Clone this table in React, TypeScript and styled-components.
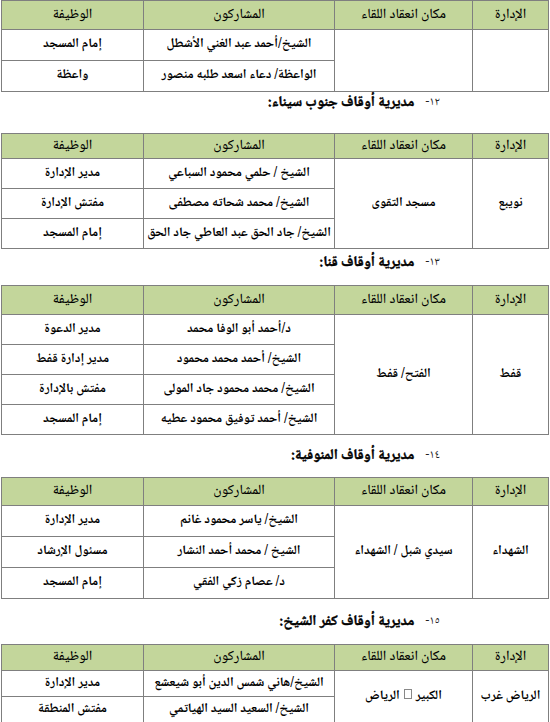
import React from "react";
import styled, { createGlobalStyle } from "styled-components";

const GlobalStyle = createGlobalStyle`
  html, body {
    margin: 0;
    padding: 0;
    background: #ffffff;
  }
  body {
    font-family: "Noto Naskh Arabic", "Noto Sans Arabic", "DejaVu Sans", sans-serif;
    color: #000;
  }
`;

const Page = styled.div`
  width: 550px;
  box-sizing: border-box;
  padding: 0 1px 0 2px;
  direction: rtl;
  display: flex;
  flex-direction: column;
`;

const Heading = styled.div<{ $top: number; $bottom: number }>`
  display: flex;
  align-items: center;
  gap: 11px;
  padding-right: 109px;
  margin-top: ${(p) => p.$top}px;
  margin-bottom: ${(p) => p.$bottom}px;
  height: 20px;
  line-height: 20px;
`;

const HeadingNumber = styled.span`
  font-size: 12px;
  font-weight: 400;
  color: #222;
`;

const HeadingTitle = styled.span`
  font-size: 14.5px;
  font-weight: 900;
  -webkit-text-stroke: 0.4px #000;
`;

const Table = styled.table`
  width: 547px;
  border-collapse: collapse;
  table-layout: fixed;
  direction: rtl;
`;

const HeadCell = styled.th<{ $h: number }>`
  background: #c3d69b;
  border: 1px solid #7f7f7f;
  height: ${(p) => p.$h}px;
  padding: 0;
  font-size: 14px;
  line-height: 1.2;
  font-weight: 500;
  text-align: center;
  vertical-align: middle;
`;

const Cell = styled.td<{ $h: number }>`
  border: 1px solid #7f7f7f;
  height: ${(p) => p.$h}px;
  padding: 0 1px;
  font-size: 13px;
  line-height: 1.2;
  font-weight: 700;
  text-align: center;
  vertical-align: middle;
  white-space: nowrap;
`;

const Tofu = styled.span`
  display: inline-block;
  width: 6px;
  height: 8px;
  border: 1px solid #888;
  margin: 0 4px;
  vertical-align: 0;
`;

type Section = {
  number?: string;
  title?: string;
  top?: number;
  bottom?: number;
  admin: string;
  place: React.ReactNode;
  head: number;
  row: number;
  rows: [string, string][];
};

const sections: Section[] = [
  {
    admin: "",
    place: "",
    head: 28,
    row: 30,
    rows: [
      ["الشيخ/أحمد عبد الغني الأشطل", "إمام المسجد"],
      ["الواعظة/ دعاء اسعد طلبه منصور", "واعظة"],
    ],
  },
  {
    number: "١٢-",
    title: "مديرية أوقاف جنوب سيناء:",
    top: 1,
    bottom: 20,
    admin: "نويبع",
    place: "مسجد التقوى",
    head: 24,
    row: 29,
    rows: [
      ["الشيخ / حلمي محمود السباعي", "مدير الإدارة"],
      ["الشيخ/ محمد شحاته مصطفى", "مفتش الإدارة"],
      ["الشيخ/ جاد الحق عبد العاطي جاد الحق", "إمام المسجد"],
    ],
  },
  {
    number: "١٣-",
    title: "مديرية أوقاف قنا:",
    top: 4,
    bottom: 12,
    admin: "قفط",
    place: "الفتح/ قفط",
    head: 28,
    row: 29,
    rows: [
      ["د/أحمد أبو الوفا محمد", "مدير الدعوة"],
      ["الشيخ/ أحمد محمد محمود", "مدير إدارة قفط"],
      ["الشيخ/ محمد محمود جاد المولى", "مفتش بالإدارة"],
      ["الشيخ/ أحمد توفيق محمود عطيه", "إمام المسجد"],
    ],
  },
  {
    number: "١٤-",
    title: "مديرية أوقاف المنوفية:",
    top: 11,
    bottom: 11,
    admin: "الشهداء",
    place: "سيدي شبل / الشهداء",
    head: 27,
    row: 30,
    rows: [
      ["الشيخ/ ياسر محمود غانم", "مدير الإدارة"],
      ["الشيخ / محمد أحمد النشار", "مسئول الإرشاد"],
      ["د/ عصام زكي الفقي", "إمام المسجد"],
    ],
  },
  {
    number: "١٥-",
    title: "مديرية أوقاف كفر الشيخ:",
    top: 13,
    bottom: 12,
    admin: "الرياض غرب",
    place: (
      <>
        الكبير<Tofu />الرياض
      </>
    ),
    head: 25,
    row: 25,
    rows: [
      ["الشيخ/هاني شمس الدين أبو شيعشع", "مدير الإدارة"],
      ["الشيخ/ السعيد السيد الهياتمي", "مفتش المنطقة"],
    ],
  },
];

const MeetingTable = ({ s }: { s: Section }) => (
  <Table>
    <colgroup>
      <col style={{ width: 76 }} />
      <col style={{ width: 138 }} />
      <col style={{ width: 191 }} />
      <col style={{ width: 142 }} />
    </colgroup>
    <thead>
      <tr>
        <HeadCell $h={s.head}>الإدارة</HeadCell>
        <HeadCell $h={s.head}>مكان انعقاد اللقاء</HeadCell>
        <HeadCell $h={s.head}>المشاركون</HeadCell>
        <HeadCell $h={s.head}>الوظيفة</HeadCell>
      </tr>
    </thead>
    <tbody>
      {s.rows.map(([name, job], i) => (
        <tr key={i}>
          {i === 0 && (
            <>
              <Cell $h={s.row} rowSpan={s.rows.length}>
                {s.admin}
              </Cell>
              <Cell $h={s.row} rowSpan={s.rows.length}>
                {s.place}
              </Cell>
            </>
          )}
          <Cell $h={s.row}>{name}</Cell>
          <Cell $h={s.row}>{job}</Cell>
        </tr>
      ))}
    </tbody>
  </Table>
);

export default function App() {
  return (
    <>
      <GlobalStyle />
      <Page>
        {sections.map((s, i) => (
          <React.Fragment key={i}>
            {s.title && (
              <Heading $top={s.top || 0} $bottom={s.bottom || 0}>
                <HeadingNumber>{s.number}</HeadingNumber>
                <HeadingTitle>{s.title}</HeadingTitle>
              </Heading>
            )}
            <MeetingTable s={s} />
          </React.Fragment>
        ))}
      </Page>
    </>
  );
}
